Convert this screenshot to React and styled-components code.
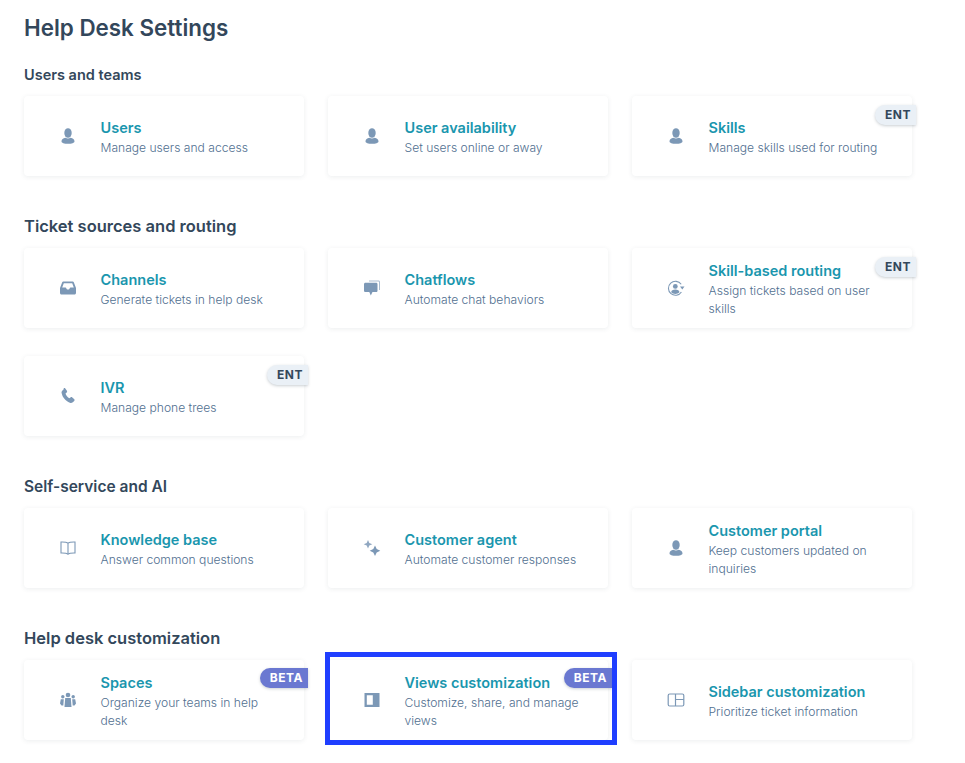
import React from 'react';
import styled, { createGlobalStyle } from 'styled-components';

const GlobalStyle = createGlobalStyle`
  html, body {
    margin: 0;
    padding: 0;
    background: #fff;
    font-family: Inter, "Liberation Sans", sans-serif;
  }
`;

const Page = styled.div`
  width: 965px;
  height: 763px;
  overflow: hidden;
  box-sizing: border-box;
  padding: 14px 0 0 24px;
`;

const PageTitle = styled.h1`
  margin: 0 0 23px;
  font-size: 22.4px;
  line-height: 28px;
  font-weight: 600;
  color: #33475b;
`;

const Section = styled.section`
  margin-bottom: 41px;
`;

const SectionTitle = styled.h2`
  margin: 0 0 12px;
  font-size: ${(p) => p.$size}px;
  line-height: 19px;
  font-weight: 600;
  color: #33475b;
`;

const Grid = styled.div`
  display: grid;
  grid-template-columns: repeat(3, 280px);
  gap: 28px 24px;
`;

const Card = styled.div`
  position: relative;
  height: 80px;
  display: flex;
  align-items: center;
  background: #fff;
  border-radius: 4px;
  box-shadow: 0 1px 5px rgba(45, 62, 80, 0.09);
`;

const IconSlot = styled.div`
  flex: 0 0 76.5px;
  display: flex;
  justify-content: center;
  padding-left: 12px;
  box-sizing: border-box;
  color: #7c98b6;

  svg {
    display: block;
    width: 18px;
    height: 18px;
  }
`;

const Text = styled.div`
  flex: 1;
  padding: 2px 24px 0 0;
`;

const CardTitle = styled.div`
  margin-bottom: 1px;
  font-size: 14.5px;
  line-height: 21px;
  font-weight: 600;
  color: #1a96ae;
`;

const Description = styled.div`
  font-size: 12.1px;
  line-height: 18px;
  font-weight: 300;
  color: #516f90;
`;

const Badge = styled.span`
  position: absolute;
  top: ${(p) => (p.$kind === 'BETA' ? '8px' : '9px')};
  right: -4px;
  height: 20px;
  box-sizing: border-box;
  padding: 0 5px 1px 10px;
  display: flex;
  align-items: center;
  border-radius: 10px 0 0 10px;
  font-size: 12px;
  font-weight: 700;
  letter-spacing: 0.5px;
  color: ${(p) => (p.$kind === 'BETA' ? '#fff' : '#33475b')};
  background: ${(p) => (p.$kind === 'BETA' ? '#6a78d1' : '#eaf0f6')};
  box-shadow: 0 1px 3px rgba(45, 62, 80, 0.25);
`;

const Highlight = styled.div`
  position: absolute;
  inset: -8px -9px -5px -3px;
  border: 5px solid #1f3eff;
  pointer-events: none;
`;

const icons = {
  user: (
    <svg viewBox="0 0 18 18" fill="currentColor">
      <ellipse cx="9" cy="6" rx="3.700" ry="4.800" />
      <path d="M2.500 14.400c0-2 1.600-3.300 3.900-3.600.8.500 1.700.7 2.600.7s1.800-.2 2.600-.7c2.300.3 3.900 1.600 3.900 3.600 0 1.400-2.800 2.400-6.500 2.400s-6.500-1-6.500-2.400z" />
    </svg>
  ),
  inbox: (
    <svg viewBox="0 0 18 18" fill="currentColor">
      <path fillRule="evenodd" d="M4.300 2.500h9.400c.5 0 .9.300 1.100.7L17 9v5c0 .9-.7 1.500-1.500 1.500h-13C1.700 15.500 1 14.900 1 14V9l2.200-5.800c.2-.4.600-.7 1.100-.7zm.5 1.800L3.200 8.600h3.300c.4 0 .7.300.8.700.1.800.8 1.300 1.700 1.300s1.600-.5 1.700-1.300c.1-.4.400-.7.800-.7h3.300l-1.600-4.300H4.800z" />
    </svg>
  ),
  chat: (
    <svg viewBox="0 0 18 18" fill="currentColor">
      <path d="M6 1.500h9.500c.9 0 1.500.6 1.500 1.500v8h-1V3c0-.3-.2-.5-.5-.5H6v-1z" opacity="0.65" />
      <path d="M2.500 3.800h10.700c.8 0 1.300.6 1.300 1.300v6.700c0 .8-.5 1.300-1.300 1.300H9.500L7.800 16.500 6.300 13.100H2.500c-.8 0-1.500-.5-1.500-1.300V5.100c0-.7.700-1.300 1.500-1.300z" />
    </svg>
  ),
  routing: (
    <svg viewBox="0 0 18 18" fill="currentColor">
      <path d="M14.200 5.300A7 7 0 1 0 14.400 13" fill="none" stroke="currentColor" strokeWidth="1.100" />
      <circle cx="8.300" cy="7.400" r="2.400" />
      <path d="M4.200 13.300c0-1.800 1.800-2.700 4.100-2.700s4.100.9 4.100 2.700c-1 1-2.500 1.600-4.100 1.600s-3.100-.6-4.100-1.600z" />
      <path d="M13 7.600h4.500l-2.200 2.800z" />
    </svg>
  ),
  phone: (
    <svg viewBox="0 0 18 18" fill="currentColor">
      <path d="M4.700 1.300c.5-.4 1.200-.3 1.600.2l1.600 2.300c.4.500.3 1.200-.2 1.600l-1.200 1c.6 2.100 2 3.900 4 4.900l1.200-1c.5-.4 1.200-.4 1.600.1l2 1.900c.4.500.4 1.200-.1 1.600l-1.400 1.300c-.8.700-1.900.9-2.900.5-4.400-1.600-7.400-5.200-8.300-9.600-.2-1 .1-2 .9-2.700l1.200-1.100z" />
    </svg>
  ),
  book: (
    <svg viewBox="0 0 18 18" fill="none" stroke="currentColor" strokeWidth="1.100">
      <path d="M9 4.200C7.700 3.100 5.300 2.900 2 3v11c3.300-.1 5.700.1 7 1.200 1.300-1.100 3.700-1.300 7-1.200V3c-3.300-.1-5.700.1-7 1.200z" />
      <path d="M9 4.200v11" />
    </svg>
  ),
  sparkle: (
    <svg viewBox="0 0 18 18" fill="currentColor">
      <path d="M5 1l1.300 3 3 1.300-3 1.300L5 9.600 3.700 6.600l-3-1.300 3-1.300z" opacity="0.85" />
      <path d="M12 6.500l1.700 3.600 3.600 1.700-3.600 1.700-1.700 3.600-1.700-3.600-3.600-1.700 3.600-1.700z" />
    </svg>
  ),
  team: (
    <svg viewBox="0 0 18 18" fill="currentColor">
      <circle cx="9" cy="4" r="2.300" />
      <circle cx="3.800" cy="5.800" r="1.700" />
      <circle cx="14.200" cy="5.800" r="1.700" />
      <path d="M6.200 7h5.600l.7 9h-7z" />
      <path d="M1.800 8.300h3l-.5 6.200H2.500L1 12.500zM13.200 8.300h3l.8 4.200-1.500 2h-1.800z" />
    </svg>
  ),
  panel: (
    <svg viewBox="0 0 18 18" fill="currentColor">
      <path fillRule="evenodd" d="M1.500 2h15v14h-15V2zm2.300 2.300v9.400h6V4.300h-6z" />
    </svg>
  ),
  layout: (
    <svg viewBox="0 0 18 18" fill="none" stroke="currentColor" strokeWidth="1.200">
      <rect x="1.200" y="3" width="15.600" height="12" rx="1.500" />
      <path d="M8.500 3v12M8.500 8.500h8.300" />
    </svg>
  ),
};

const sections = [
  {
    title: 'Users and teams',
    titleSize: 14.5,
    cards: [
      { icon: 'user', title: 'Users', text: 'Manage users and access' },
      { icon: 'user', title: 'User availability', text: 'Set users online or away' },
      { icon: 'user', title: 'Skills', text: 'Manage skills used for routing', badge: 'ENT' },
    ],
  },
  {
    title: 'Ticket sources and routing',
    titleSize: 16.5,
    cards: [
      { icon: 'inbox', title: 'Channels', text: 'Generate tickets in help desk' },
      { icon: 'chat', title: 'Chatflows', text: 'Automate chat behaviors' },
      { icon: 'routing', title: 'Skill-based routing', text: 'Assign tickets based on user skills', badge: 'ENT' },
      { icon: 'phone', title: 'IVR', text: 'Manage phone trees', badge: 'ENT' },
    ],
  },
  {
    title: 'Self-service and AI',
    titleSize: 15.5,
    cards: [
      { icon: 'book', title: 'Knowledge base', text: 'Answer common questions' },
      { icon: 'sparkle', title: 'Customer agent', text: 'Automate customer responses' },
      { icon: 'user', title: 'Customer portal', text: 'Keep customers updated on inquiries' },
    ],
  },
  {
    title: 'Help desk customization',
    titleSize: 16.5,
    cards: [
      { icon: 'team', title: 'Spaces', text: 'Organize your teams in help desk', badge: 'BETA' },
      { icon: 'panel', title: 'Views customization', text: 'Customize, share, and manage views', badge: 'BETA', highlighted: true },
      { icon: 'layout', title: 'Sidebar customization', text: 'Prioritize ticket information' },
    ],
  },
];

const App = () => {
  return (
    <Page>
      <GlobalStyle />
      <PageTitle>Help Desk Settings</PageTitle>
      {sections.map((section) => (
        <Section key={section.title}>
          <SectionTitle $size={section.titleSize}>{section.title}</SectionTitle>
          <Grid>
            {section.cards.map((card) => (
              <Card key={card.title}>
                <IconSlot>{icons[card.icon]}</IconSlot>
                <Text>
                  <CardTitle>{card.title}</CardTitle>
                  <Description>{card.text}</Description>
                </Text>
                {card.badge && <Badge $kind={card.badge}>{card.badge}</Badge>}
                {card.highlighted && <Highlight />}
              </Card>
            ))}
          </Grid>
        </Section>
      ))}
    </Page>
  );
};

export default App;
